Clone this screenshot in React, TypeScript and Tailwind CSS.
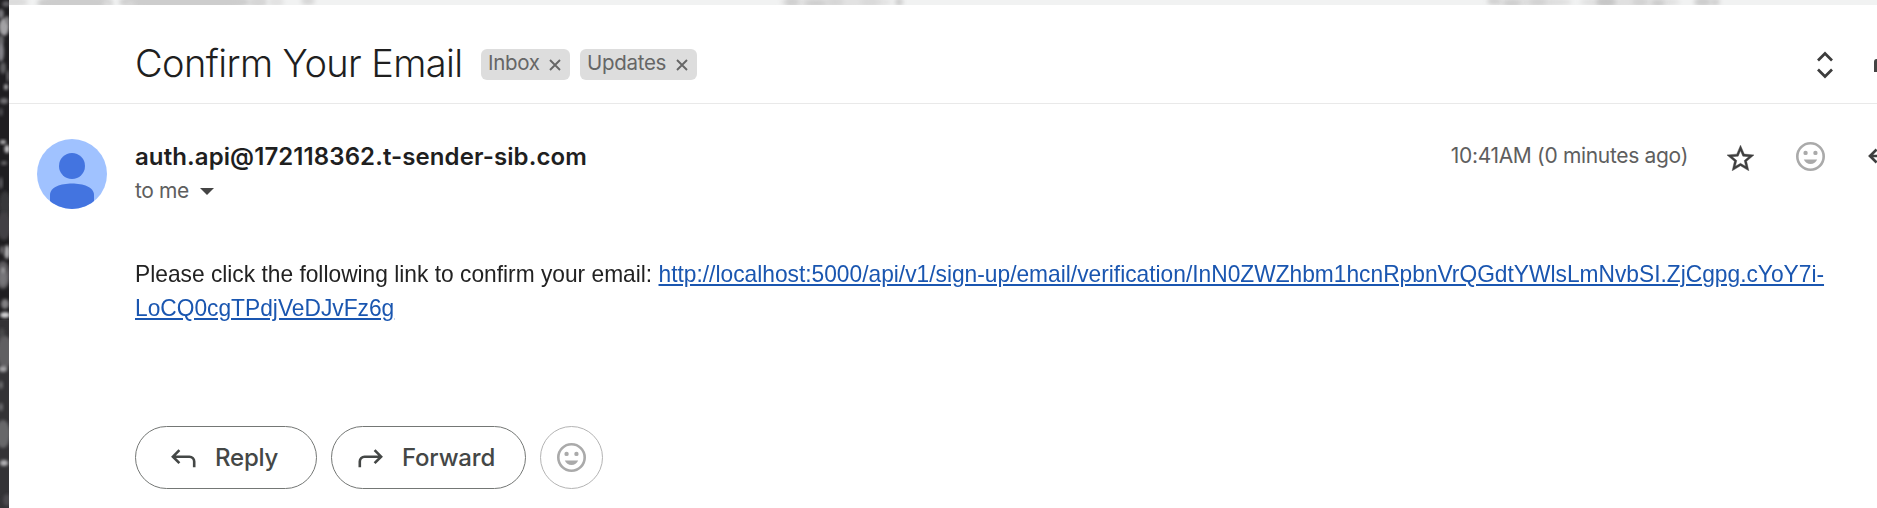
import React from "react";

type Blob = [cx: number, cy: number, rx: number, ry: number, fill: string];

const SIDE_BLOBS: Blob[] = [
  [6, 4, 4, 3, "#5a595d"],
  [1, 14, 3, 5, "#77767a"],
  [4, 27, 5, 9, "#a3a2a5"],
  [7, 20, 2, 4, "#8a898c"],
  [1, 40, 3, 5, "#68676a"],
  [1, 52, 3, 10, "#85848a"],
  [3, 68, 3, 6, "#5f5e62"],
  [6, 87, 2, 3, "#a8a7aa"],
  [8, 76, 1.5, 6, "#6a696c"],
  [4, 101, 4, 3, "#6f6e72"],
  [1, 112, 2, 4, "#4c4b4f"],
  [3, 142, 3, 2, "#bbbabd"],
  [7, 149, 2.5, 4, "#c9c8cb"],
  [4, 163, 3, 2, "#69686b"],
  [1, 183, 1.5, 6, "#67666a"],
  [5, 205, 6, 14, "#38373a"],
  [4, 226, 7, 14, "#424144"],
  [7, 252, 3, 7, "#a9a8ab"],
  [2, 250, 2, 4, "#6a696c"],
  [3, 275, 7, 14, "#5d5c5f"],
  [3, 278, 4, 8, "#777679"],
  [3, 270, 1.5, 3, "#a7a6a9"],
  [5, 304, 4, 5, "#807f82"],
  [5, 315, 5, 3, "#d2d1d4"],
  [2, 335, 3, 7, "#49484b"],
  [5, 352, 8, 16, "#605f62"],
  [3, 369, 4, 3, "#a6a5a8"],
  [1, 385, 2, 4, "#6b6a6d"],
  [1, 407, 2, 4, "#6b6a6e"],
  [3, 434, 7, 14, "#68676a"],
  [4, 463, 4, 3, "#b4b3b6"],
  [7, 500, 4, 6, "#4b4a4e"],
];

const TOP_BLOBS: Blob[] = [
  [14, 2, 14, 5, "#dcdcdc"],
  [75, 3, 38, 9, "#cdcdcd"],
  [185, 2, 66, 10, "#cdcdcd"],
  [107, 4, 4, 2, "#e6e6e6"],
  [130, 4, 5, 2, "#dcdcdc"],
  [258, 2, 10, 6, "#d6d6d6"],
  [276, 2, 8, 5, "#e2e2e2"],
  [308, 1, 7, 4, "#d6d6d6"],
  [836, 2, 56, 7, "#e2e2e2"],
  [792, 2, 7, 5, "#d0d0d0"],
  [816, 3, 12, 3, "#cccccc"],
  [835, 2, 9, 4, "#d6d6d6"],
  [870, 2, 10, 4, "#d9d9d9"],
  [899, 2, 4, 4, "#cccccc"],
  [1530, 2, 42, 5, "#dedede"],
  [1494, 1, 7, 3, "#cfcfcf"],
  [1512, 3, 9, 3, "#cccccc"],
  [1538, 2, 9, 3, "#d0d0d0"],
  [1630, 2, 50, 6, "#e0e0e0"],
  [1606, 2, 10, 5, "#c6c6c6"],
  [1640, 2, 8, 4, "#d2d2d2"],
  [1658, 3, 7, 3, "#c9c9c9"],
  [1703, 2, 9, 5, "#cdcdcd"],
  [1715, 2, 5, 4, "#d0d0d0"],
];

function Blobs({ items, blur, id }: { items: Blob[]; blur: number; id: string }) {
  return (
    <>
      <filter id={id} x="-50%" y="-50%" width="200%" height="200%">
        <feGaussianBlur stdDeviation={blur} />
      </filter>
      {items.map(([cx, cy, rx, ry, fill], i) => (
        <ellipse key={i} cx={cx} cy={cy} rx={rx} ry={ry} fill={fill} filter={`url(#${id})`} />
      ))}
    </>
  );
}

function Smile({ className }: { className: string }) {
  return (
    <svg viewBox="2 2 20 20" className={className} fill="currentColor">
      <path d="M12 2a10 10 0 1 0 0 20 10 10 0 0 0 0-20Zm0 18.200a8.200 8.200 0 1 1 0-16.400 8.200 8.200 0 0 1 0 16.400Z" />
      <circle cx="8.6" cy="9.5" r="1.5" />
      <circle cx="15.4" cy="9.5" r="1.5" />
      <path d="M7.4 14h9.2c-.7 1.900-2.500 3.100-4.600 3.100S8.100 15.900 7.400 14Z" />
    </svg>
  );
}

function ReplyArrow({ className }: { className: string }) {
  return (
    <svg viewBox="0 0 25 19" className={className} fill="none" stroke="currentColor" strokeWidth="2.6">
      <path d="M8.400 1.200 1.900 7.700 8.400 14.200M2.300 7.700H18.500a4.700 4.700 0 0 1 4.700 4.700V18.200" />
    </svg>
  );
}

function Tag({ label, className }: { label: string; className: string }) {
  return (
    <span className={`flex h-[31px] items-center justify-between rounded-[6px] bg-[#ddd] pr-[9px] pl-[7px] text-[20.5px] tracking-[-0.3px] text-[#666] ${className}`}>
      <span className="relative -top-px">{label}</span>
      <svg viewBox="0 0 12 12" className="mt-[2px] size-[12px]" stroke="currentColor" strokeWidth="1.9">
        <path d="M1 1 11 11M11 1 1 11" />
      </svg>
    </span>
  );
}

export default function App() {
  return (
    <div className="flex h-[508px] w-[1877px] overflow-hidden bg-white font-['Inter',sans-serif] text-[#1f1f1f]">
      <svg viewBox="0 0 9 508" className="h-[508px] w-[9px] shrink-0 bg-[#242326]">
        <rect width="9" height="508" fill="#1f1e21" />
        <rect y="320" width="9" height="188" fill="#343336" />
        <Blobs id="side" items={SIDE_BLOBS} blur={1.5} />
      </svg>

      <div className="flex w-[1868px] flex-col">
        <svg viewBox="9 0 1868 5" className="h-[5px] w-[1868px] shrink-0 bg-[#f1f2f2]">
          <Blobs id="top" items={TOP_BLOBS} blur={2} />
        </svg>

        <header className="flex h-[99px] shrink-0 items-center border-b border-[#e9e9e9] pt-[20px] pl-[126px]">
          <h1 className="w-[346px] shrink-0 pb-[2px] text-[38px] leading-[48px] font-light tracking-[-0.6px] whitespace-nowrap">
            Confirm Your Email
          </h1>
          <Tag label="Inbox" className="w-[89px]" />
          <Tag label="Updates" className="ml-[10px] w-[117px]" />
          <svg viewBox="0 0 16 28" className="mt-[2px] ml-auto h-[28px] w-[16px] shrink-0" fill="none" stroke="#3c3c3c" strokeWidth="2.7">
            <path d="M1 9.500 8 2.500 15 9.500M1 18.500 8 25.500 15 18.500" />
          </svg>
          <svg viewBox="0 0 3 14" className="mt-[3px] ml-[41px] h-[14px] w-[3px] shrink-0">
            <path d="M3 0H2.500A2.500 3 0 0 0 0 3V13H3Z" fill="#444" />
          </svg>
        </header>

        <section className="flex h-[142px] shrink-0 items-start pl-[28px]">
          <svg viewBox="0 0 70 70" className="mt-[35px] size-[70px] shrink-0">
            <clipPath id="face">
              <circle cx="35" cy="35" r="35" />
            </clipPath>
            <circle cx="35" cy="35" r="35" fill="#a0c2ff" />
            <g clipPath="url(#face)" fill="#4374e0">
              <circle cx="35" cy="27" r="13" />
              <path d="M13 70V56C13 48 24 44.500 35 44.500S57 48 57 56V70Z" />
            </g>
          </svg>
          <div className="ml-[28px] pt-[37px]">
            <div className="text-[24px] leading-[32px] font-semibold tracking-[0.09px]">auth.api@172118362.t-sender-sib.com</div>
            <div className="mt-[2px] flex items-center text-[21px] leading-[32px] tracking-[-0.4px] text-[#5e5e5e]">
              to me
              <svg viewBox="0 0 14 7" className="ml-[11px] h-[7px] w-[14px]">
                <path d="M0 0H14L7 7Z" fill="#444" />
              </svg>
            </div>
          </div>
          <div className="mt-[36px] ml-auto flex h-[32px] shrink-0 items-center text-[#3f3f3f]">
            <span className="mr-[39px] text-[21px] leading-[32px] tracking-[-0.32px] text-[#5e5e5e]">10:41AM (0 minutes ago)</span>
            <svg viewBox="2 2 20 19" className="mt-[3px] h-[26px] w-[27px]" fill="currentColor" stroke="currentColor" strokeWidth="0.3">
              <path d="m22 9.240-7.190-.62L12 2 9.190 8.630 2 9.240l5.460 4.730L5.820 21 12 17.270 18.180 21l-1.630-7.030L22 9.240ZM12 15.400l-3.760 2.270 1-4.280-3.320-2.880 4.380-.38L12 6.100l1.710 4.040 4.380.38-3.320 2.880 1 4.280L12 15.400Z" />
            </svg>
            <Smile className="ml-[42px] size-[29px] text-[#aaa]" />
            <svg viewBox="0 0 9 16" className="ml-[43px] h-[16px] w-[9px]" fill="none" stroke="currentColor" strokeWidth="2.700">
              <path d="M8.600 1.500 2 8l6.600 6.500M2 8H9" />
            </svg>
          </div>
        </section>

        <p className="ml-[126px] h-[180px] shrink-0 origin-left scale-x-[0.948] pt-[11px] font-['Liberation_Sans',sans-serif] text-[24px] leading-[34px] whitespace-nowrap text-[#222]">
          Please click the following link to confirm your email:{" "}
          <a className="text-[#1a56b0] underline">
            http://localhost:5000/api/v1/sign-up/email/verification/InN0ZWZhbm1hcnRpbnVrQGdtYWlsLmNvbSI.ZjCgpg.cYoY7i-
            <br />
            LoCQ0cgTPdjVeDJvFz6g
          </a>
        </p>

        <footer className="flex text-[24px] font-medium tracking-[-0.2px] text-[#444746]">
          <button className="ml-[126px] flex h-[63px] w-[182px] items-center rounded-full border border-[#747775] pl-[35px]">
            <ReplyArrow className="mt-px h-[19px] w-[25px]" />
            <span className="ml-[19px]">Reply</span>
          </button>
          <button className="ml-[14px] flex h-[63px] w-[195px] items-center rounded-full border border-[#747775] pl-[26px]">
            <ReplyArrow className="mt-px h-[19px] w-[25px] -scale-x-100" />
            <span className="ml-[19px]">Forward</span>
          </button>
          <button className="ml-[14px] flex size-[63px] items-center justify-center rounded-full border border-[#b4b4b4]">
            <Smile className="size-[29px] text-[#aaa]" />
          </button>
        </footer>
      </div>
    </div>
  );
}
